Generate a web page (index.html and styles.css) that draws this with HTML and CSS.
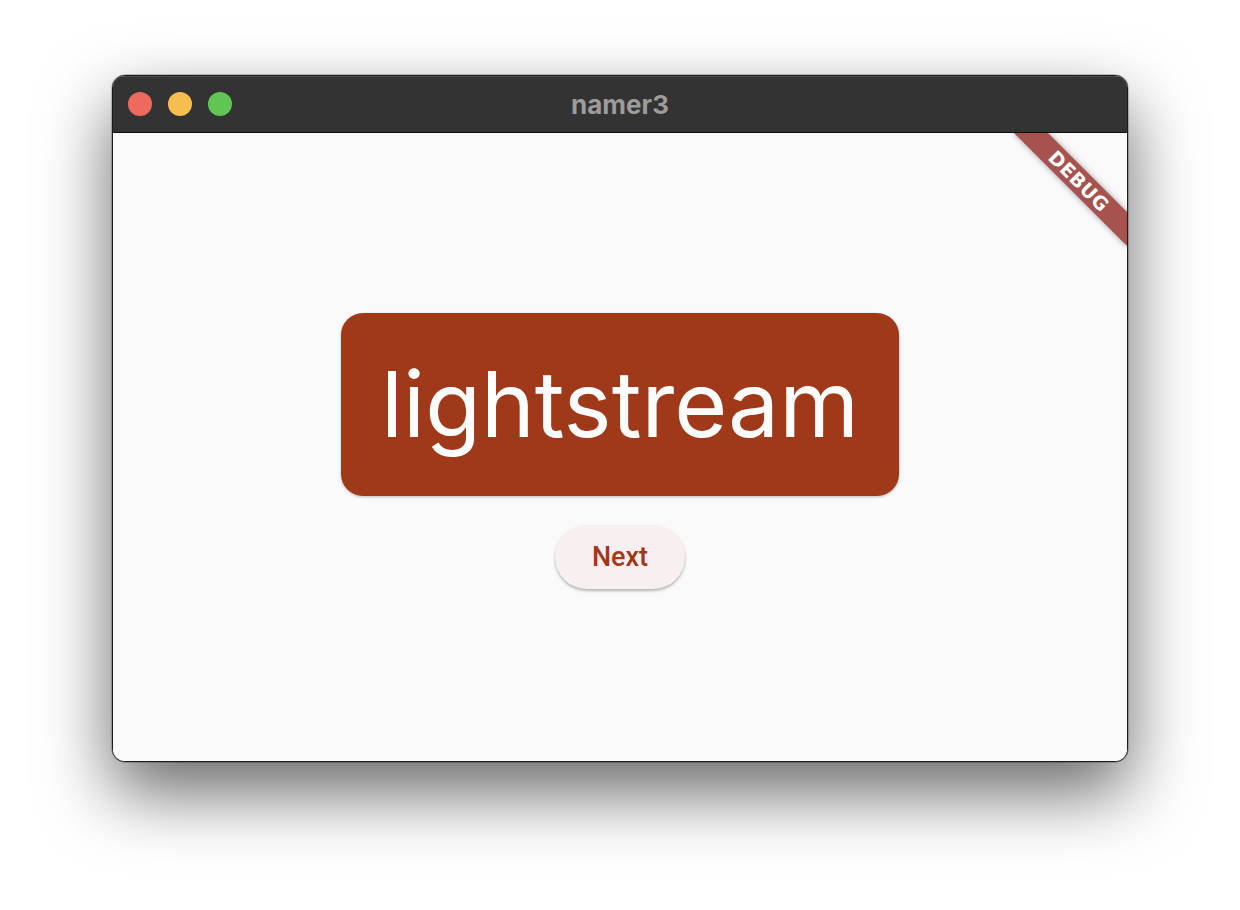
FILE: index.html
```html
<!DOCTYPE html>
<html>
<head>
<meta charset="utf-8">
<link rel="stylesheet" href="styles.css">
</head>
<body>
<div class="window">
  <div class="titlebar">
    <div class="lights">
      <span class="light red"></span>
      <span class="light yellow"></span>
      <span class="light green"></span>
    </div>
    <div class="title">namer3</div>
  </div>
  <div class="content">
    <div class="card"><span class="word">lightstream</span></div>
    <button class="next">Next</button>
    <div class="banner">DEBUG</div>
  </div>
</div>
</body>
</html>
```
FILE: styles.css
```css
html, body {
  margin: 0;
  padding: 0;
  background: #ffffff;
}
body {
  width: 1240px;
  height: 910px;
  overflow: hidden;
}
.window {
  margin: 75px 0 0 112px;
  width: 1016px;
  height: 687px;
  box-sizing: border-box;
  border: 1px solid #1c1c1c;
  border-radius: 13px;
  overflow: hidden;
  display: flex;
  flex-direction: column;
  box-shadow: 0 30px 70px rgba(0, 0, 0, 0.6), 0 0 0 0.5px rgba(0,0,0,0.4);
  background: #fafafa;
}
.titlebar {
  position: relative;
  height: 56px;
  flex: 0 0 56px;
  background: #333333;
  border-bottom: 1px solid #0e0e0e;
  box-shadow: inset 0 1px 0 rgba(255,255,255,0.12);
  display: flex;
  align-items: center;
}
.lights {
  display: flex;
  gap: 16px;
  padding-left: 15px;
}
.light {
  width: 24px;
  height: 24px;
  border-radius: 50%;
  display: block;
}
.red { background: #ee6a5f; }
.yellow { background: #f5be4f; }
.green { background: #61c554; }
.title {
  position: absolute;
  left: 0;
  right: 0;
  top: 0;
  bottom: 0;
  display: flex;
  align-items: center;
  justify-content: center;
  font-family: Inter, "Liberation Sans", sans-serif;
  font-weight: 700;
  font-size: 26px;
  color: #9c9c9c;
  pointer-events: none;
}
.content {
  position: relative;
  flex: 1;
  display: flex;
  flex-direction: column;
  align-items: center;
  justify-content: center;
  padding-top: 7px;
  overflow: hidden;
  background: #fafafa;
}
.card {
  background: #a0381a;
  border-radius: 22px;
  padding: 40px;
  height: 183px;
  box-sizing: border-box;
  box-shadow: 0 1px 3px rgba(0,0,0,0.25);
  display: flex;
  align-items: center;
}
.word {
  font-family: Inter, "Noto Sans", sans-serif;
  font-size: 91px;
  line-height: 104px;
  color: #ffffff;
  font-weight: 400;
}
.next {
  margin-top: 29px;
  height: 64px;
  padding: 0 37px;
  border: none;
  border-radius: 32px;
  background: #f8eff0;
  color: #a0381a;
  font-family: Roboto, "Liberation Sans", sans-serif;
  font-weight: 500;
  font-size: 27px;
  box-shadow: 0 2px 3px rgba(0,0,0,0.28);
}
.banner {
  position: absolute;
  top: 36px;
  right: -32px;
  width: 160px;
  height: 24px;
  transform: rotate(45deg);
  background: #a6524e;
  color: #ffffff;
  font-family: "DejaVu Sans", "Liberation Sans", sans-serif;
  font-weight: 900;
  font-size: 19px;
  line-height: 24px;
  text-align: center;
  letter-spacing: 0.5px;
  box-shadow: 0 0 6px rgba(0,0,0,0.35);
}
```
